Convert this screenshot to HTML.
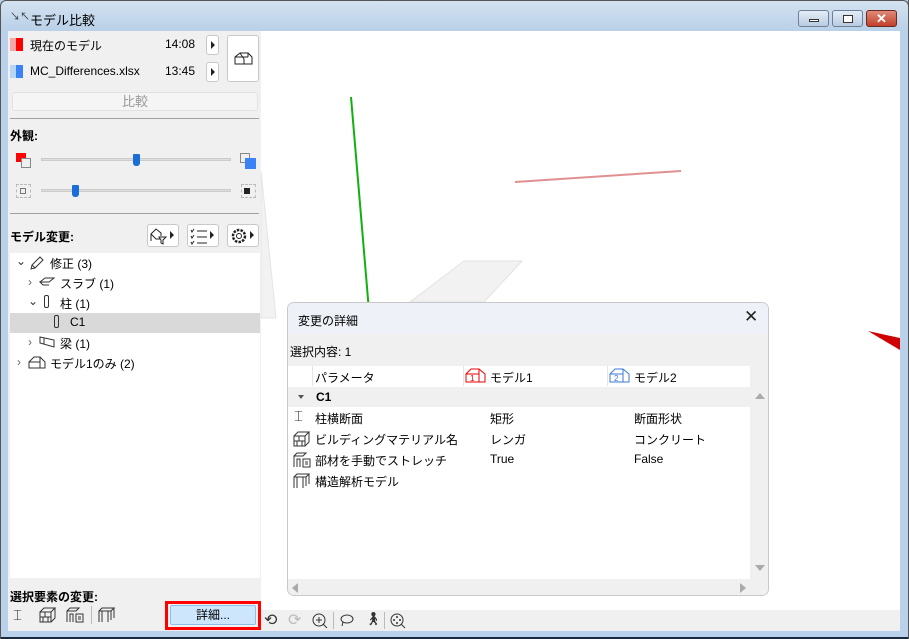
<!DOCTYPE html>
<html><head><meta charset="utf-8"><style>
*{box-sizing:border-box;margin:0;padding:0}
html,body{width:909px;height:639px;overflow:hidden}
body{background:#b9d1ea;font-family:"Liberation Sans","Noto Sans CJK JP",sans-serif;font-size:12px;color:#000;position:relative}
.a{position:absolute}
.t{white-space:nowrap}
.btn{position:absolute;background:#fff;border:1px solid #c8c8c8;border-radius:3px}
</style></head><body>
<div class="a" style="left:0;top:0;width:909px;height:31px;background:linear-gradient(#d4e2f1,#b9d0e8);border:1px solid #555;border-bottom:none;border-radius:6px 6px 0 0"></div>
<div class="a t" style="left:10px;top:8px;font-size:10px;color:#333">↘↖</div>
<div class="a t" style="left:30px;top:10px;font-size:13px">モデル比較</div>
<div class="a" style="left:798px;top:10px;width:31px;height:17px;border:1px solid #6d7f97;border-radius:3px;background:linear-gradient(#e4edf7,#b9cbe2)"><div class="a" style="left:10px;top:8px;width:10px;height:3px;border:1px solid #333;background:#fff"></div></div>
<div class="a" style="left:832px;top:10px;width:31px;height:17px;border:1px solid #6d7f97;border-radius:3px;background:linear-gradient(#e4edf7,#b9cbe2)"><div class="a" style="left:10px;top:4px;width:10px;height:8px;border:1px solid #333;background:#fff"></div></div>
<div class="a t" style="left:866px;top:10px;width:31px;height:17px;border:1px solid #6b2a20;border-radius:3px;background:linear-gradient(#e08a78,#c0402c);color:#fff;font-weight:bold;text-align:center;line-height:15px;font-size:13px">✕</div>
<div class="a" style="left:8px;top:31px;width:892px;height:600px;background:#f0f0f0"></div>
<div class="a" style="left:261px;top:31px;width:639px;height:579px;background:#fff"></div>
<div class="a" style="left:0;top:637px;width:909px;height:2px;background:#1a2a3a"></div>
<div class="a" style="left:0;top:31px;width:1px;height:608px;background:#555"></div>
<div class="a" style="left:908px;top:0;width:1px;height:639px;background:#555"></div>
<div class="a" style="left:10px;top:38px;width:6px;height:13px;background:#f8a8a8"></div><div class="a" style="left:16px;top:38px;width:7px;height:13px;background:#f00"></div>
<div class="a t" style="left:30px;top:37px;font-size:12px">現在のモデル</div>
<div class="a t" style="left:165px;top:37px">14:08</div>
<div class="btn" style="left:206px;top:35px;width:13px;height:20px"><div class="a" style="left:4px;top:5px;border-left:4px solid #222;border-top:4px solid transparent;border-bottom:4px solid transparent"></div></div>
<div class="a" style="left:10px;top:65px;width:6px;height:13px;background:#b8d4f8"></div><div class="a" style="left:16px;top:65px;width:7px;height:13px;background:#3b82f6"></div>
<div class="a t" style="left:30px;top:64px">MC_Differences.xlsx</div>
<div class="a t" style="left:165px;top:64px">13:45</div>
<div class="btn" style="left:206px;top:62px;width:13px;height:20px"><div class="a" style="left:4px;top:5px;border-left:4px solid #222;border-top:4px solid transparent;border-bottom:4px solid transparent"></div></div>
<div class="btn" style="left:227px;top:35px;width:32px;height:47px"><svg class="a" style="left:6px;top:15px" width="20" height="14"><path d="M1 13V6L6 2H14L18 6V13ZM1 6H14M6 2L10 8V13M14 2V6" fill="none" stroke="#222" stroke-width="1"/></svg></div>
<div class="a t" style="left:12px;top:92px;width:246px;height:19px;background:#f5f5f5;border:1px solid #e2e2e2;border-radius:3px;text-align:center;color:#999;line-height:17px;font-size:13px">比較</div>
<div class="a" style="left:10px;top:118px;width:249px;height:1px;background:#a0a0a0"></div>
<div class="a t" style="left:10px;top:127px;font-weight:bold">外観:</div>
<div class="a" style="left:16px;top:153px;width:10px;height:9px;background:#f00"></div>
<div class="a" style="left:21px;top:158px;width:10px;height:10px;border:1px solid #888;background:#f0f0f0"></div>
<div class="a" style="left:41px;top:158px;width:190px;height:3px;background:#ddd;border:1px solid #ccc"></div>
<div class="a" style="left:133px;top:154px;width:7px;height:12px;background:#1a6ed8;border-radius:1px 1px 3px 3px"></div>
<div class="a" style="left:240px;top:153px;width:10px;height:10px;border:1px solid #888"></div>
<div class="a" style="left:245px;top:158px;width:11px;height:11px;background:#3b82f6"></div>
<div class="a" style="left:16px;top:184px;width:15px;height:14px;border:1px dashed #bbb"></div>
<div class="a" style="left:20px;top:188px;width:6px;height:6px;border:1px solid #777"></div>
<div class="a" style="left:41px;top:189px;width:190px;height:3px;background:#ddd;border:1px solid #ccc"></div>
<div class="a" style="left:72px;top:185px;width:7px;height:12px;background:#1a6ed8;border-radius:1px 1px 3px 3px"></div>
<div class="a" style="left:241px;top:184px;width:15px;height:14px;border:1px dashed #bbb"></div>
<div class="a" style="left:244px;top:188px;width:6px;height:6px;background:#222"></div>
<div class="a" style="left:10px;top:213px;width:249px;height:1px;background:#a0a0a0"></div>
<div class="a t" style="left:10px;top:228px;font-weight:bold">モデル変更:</div>
<div class="btn" style="left:147px;top:224px;width:32px;height:23px"><span class="a" style="left:22px;top:6px;border-left:4px solid #222;border-top:4px solid transparent;border-bottom:4px solid transparent"></span><svg class="a" style="left:2px;top:2px" width="18" height="18"><path d="M1 14V7L6 2L11 6V9M1 7L6 12H10M9 10H16L13 13V17L11 16V13Z" fill="none" stroke="#222"/></svg></div>
<div class="btn" style="left:187px;top:224px;width:32px;height:23px"><span class="a" style="left:22px;top:6px;border-left:4px solid #222;border-top:4px solid transparent;border-bottom:4px solid transparent"></span><svg class="a" style="left:2px;top:2px" width="18" height="18"><path d="M7 4H17M7 10H17M7 16H17M1 3L2 5L4 2M1 9L2 11L4 8M1 15L2 17L4 14" fill="none" stroke="#222"/></svg></div>
<div class="btn" style="left:227px;top:224px;width:32px;height:23px"><span class="a" style="left:22px;top:6px;border-left:4px solid #222;border-top:4px solid transparent;border-bottom:4px solid transparent"></span><svg class="a" style="left:2px;top:2px" width="18" height="18"><circle cx="9" cy="9" r="6" fill="none" stroke="#222" stroke-dasharray="2.5 1.2" stroke-width="2.5"/><circle cx="9" cy="9" r="2.5" fill="none" stroke="#222"/></svg></div>
<div class="a" style="left:10px;top:253px;width:250px;height:325px;background:#fff"></div>
<div class="a" style="left:10px;top:313px;width:250px;height:20px;background:#d9d9d9"></div>
<div class="a t" style="left:16px;top:254px;font-size:12px;color:#333">⌄</div>
<svg class="a" style="left:29px;top:255px" width="16" height="16"><path d="M2 14L3 10L11 2L14 5L6 13ZM3 10L6 13" fill="none" stroke="#333"/></svg>
<div class="a t" style="left:50px;top:255px">修正 (3)</div>
<div class="a t" style="left:28px;top:275px;color:#666">›</div>
<svg class="a" style="left:39px;top:277px" width="16" height="10"><path d="M1 5L6 1H15L10 5H1L4 8H10" fill="none" stroke="#333"/></svg>
<div class="a t" style="left:60px;top:275px">スラブ (1)</div>
<div class="a t" style="left:28px;top:294px;color:#333">⌄</div>
<div class="a" style="left:44px;top:295px;width:5px;height:13px;border:1px solid #333;border-radius:2px"></div>
<div class="a t" style="left:60px;top:295px">柱 (1)</div>
<div class="a" style="left:54px;top:315px;width:5px;height:13px;border:1px solid #333;border-radius:2px"></div>
<div class="a t" style="left:70px;top:315px">C1</div>
<div class="a t" style="left:28px;top:335px;color:#666">›</div>
<svg class="a" style="left:39px;top:336px" width="16" height="12"><path d="M1 1L15 4V11L1 7ZM5 2V8" fill="none" stroke="#333"/></svg>
<div class="a t" style="left:60px;top:335px">梁 (1)</div>
<div class="a t" style="left:17px;top:355px;color:#666">›</div>
<svg class="a" style="left:28px;top:356px" width="18" height="13"><path d="M1 12V6L6 1H12L17 6V12ZM1 6H12V12M12 1V6" fill="none" stroke="#333"/></svg>
<div class="a t" style="left:50px;top:355px">モデル1のみ (2)</div>
<div class="a t" style="left:10px;top:588px;font-weight:bold">選択要素の変更:</div>
<div class="a t" style="left:13px;top:607px;font-size:15px;color:#333">⌶</div>
<svg class="a" style="left:39px;top:607px" width="18" height="16"><path d="M1 5H12V15H1ZM1 5L5 1H16L12 5M16 1V11L12 15M1 10H12M6 5V10M4 10V15M9 10V15" fill="none" stroke="#333"/></svg>
<svg class="a" style="left:66px;top:607px" width="18" height="16"><path d="M1 15V4L4 1H13L10 4H1M4 15V7H7V15M10 7H17V15H10ZM12 10H15M12 12H15" fill="none" stroke="#333"/></svg>
<div class="a" style="left:91px;top:606px;width:1px;height:18px;background:#bbb"></div>
<svg class="a" style="left:98px;top:607px" width="18" height="16"><path d="M1 15V4L4 1H16L13 4H1M4 4V15M10 4V15M13 4V13M16 1V11" fill="none" stroke="#333"/></svg>
<div class="a" style="left:165px;top:601px;width:96px;height:29px;border:3px solid #f00"></div>
<div class="a t" style="left:170px;top:605px;width:86px;height:20px;background:#cde6fb;border:1px solid #8fbfe8;border-radius:2px;text-align:center;line-height:18px">詳細...</div>
<svg class="a" style="left:261px;top:31px" width="639" height="579">
<path d="M0 140L15 287H0Z" fill="#f2f2f2" stroke="#e4e4e4"/>
<path d="M203 230H261L223 271H149Z" fill="#f2f2f2" stroke="#e2e2e2"/>
<path d="M90 66L108 280" stroke="#10b010" stroke-width="2"/>
<path d="M254 151L420 140" stroke="#e09090" stroke-width="2"/>
<path d="M607 300L639 307V319Z" fill="#d00000"/>
</svg>
<div class="a t" style="left:264px;top:610px;font-size:16px;color:#333">⟲</div>
<div class="a t" style="left:288px;top:610px;font-size:16px;color:#bbb">⟳</div>
<svg class="a" style="left:311px;top:612px" width="18" height="18"><circle cx="8" cy="8" r="6" fill="none" stroke="#333"/><path d="M12 12L16 16M5 8H11M8 5V11" stroke="#333"/></svg>
<div class="a" style="left:333px;top:612px;width:1px;height:17px;background:#bbb"></div>
<svg class="a" style="left:339px;top:613px" width="16" height="14"><ellipse cx="8" cy="6" rx="6" ry="4" fill="none" stroke="#333"/><path d="M4 9L3 13" stroke="#333"/></svg>
<div class="a t" style="left:365px;top:611px;font-size:13px;color:#333">🚶︎</div>
<div class="a" style="left:384px;top:612px;width:1px;height:17px;background:#bbb"></div>
<svg class="a" style="left:389px;top:612px" width="18" height="18"><circle cx="8" cy="8" r="6" fill="none" stroke="#333"/><path d="M12 12L16 16" stroke="#333"/><circle cx="8" cy="5" r="1" fill="#333"/><circle cx="5" cy="8" r="1" fill="#333"/><circle cx="11" cy="8" r="1" fill="#333"/><circle cx="8" cy="11" r="1" fill="#333"/></svg>
<div class="a" style="left:287px;top:302px;width:482px;height:294px;background:#fff;border:1px solid #c8c8c8;border-radius:7px;overflow:hidden">
 <div class="a" style="left:0;top:0;width:482px;height:31px;background:#eef2f8"></div>
 <div class="a t" style="left:10px;top:9px;font-size:12px">変更の詳細</div>
 <div class="a t" style="left:456px;top:4px;font-size:17px;color:#222">✕</div>
 <div class="a" style="left:0;top:31px;width:482px;height:32px;background:#f0f0f0"></div>
 <div class="a t" style="left:2px;top:40px">選択内容: 1</div>
 <div class="a" style="left:0;top:63px;width:482px;height:20px;background:#fff"></div>
 <div class="a" style="left:462px;top:63px;width:20px;height:230px;background:#f0f0f0"></div>
 <div class="a" style="left:0;top:276px;width:482px;height:18px;background:#f0f0f0"></div>
 <div class="a" style="left:0;top:63px;width:25px;height:20px;border-right:1px solid #e5e5e5"></div>
 <div class="a t" style="left:27px;top:66px">パラメータ</div>
 <div class="a" style="left:175px;top:63px;width:1px;height:20px;background:#e5e5e5"></div>
 <svg class="a" style="left:177px;top:65px" width="22" height="15"><path d="M1 14V6L6 1H14L20 6V14ZM1 6H14V14M14 1V6" fill="none" stroke="#e00"/><text x="5" y="13" font-size="8" fill="#e00" font-family="Liberation Sans">1</text></svg>
 <div class="a t" style="left:202px;top:66px">モデル1</div>
 <div class="a" style="left:319px;top:63px;width:1px;height:20px;background:#e5e5e5"></div>
 <svg class="a" style="left:321px;top:65px" width="22" height="15"><path d="M1 14V6L6 1H14L20 6V14ZM1 6H14V14M14 1V6" fill="none" stroke="#3b7ad8"/><text x="5" y="13" font-size="8" fill="#3b7ad8" font-family="Liberation Sans">2</text></svg>
 <div class="a t" style="left:346px;top:66px">モデル2</div>
 <div class="a" style="left:0;top:84px;width:462px;height:20px;background:#f0f0f0"></div>
 <div class="a" style="left:10px;top:92px;border-top:4px solid #555;border-left:3.5px solid transparent;border-right:3.5px solid transparent"></div>
 <div class="a t" style="left:28px;top:87px;font-weight:bold">C1</div>
 <div class="a" style="left:467px;top:90px;border-bottom:6px solid #aaa;border-left:5px solid transparent;border-right:5px solid transparent"></div>
 <div class="a" style="left:467px;top:262px;border-top:6px solid #aaa;border-left:5px solid transparent;border-right:5px solid transparent"></div>
 <div class="a" style="left:452px;top:280px;border-left:6px solid #aaa;border-top:5px solid transparent;border-bottom:5px solid transparent"></div>
 <div class="a" style="left:4px;top:280px;border-right:6px solid #aaa;border-top:5px solid transparent;border-bottom:5px solid transparent"></div>
 <div class="a t" style="left:6px;top:105px;font-size:15px;color:#333">⌶</div>
 <div class="a t" style="left:27px;top:107px">柱横断面</div><div class="a t" style="left:202px;top:107px">矩形</div><div class="a t" style="left:346px;top:107px">断面形状</div>
 <svg class="a" style="left:5px;top:128px" width="18" height="16"><path d="M1 5H12V15H1ZM1 5L5 1H16L12 5M16 1V11L12 15M1 10H12M6 5V10M4 10V15M9 10V15" fill="none" stroke="#333"/></svg>
 <div class="a t" style="left:27px;top:128px">ビルディングマテリアル名</div><div class="a t" style="left:202px;top:128px">レンガ</div><div class="a t" style="left:346px;top:128px">コンクリート</div>
 <svg class="a" style="left:5px;top:149px" width="18" height="16"><path d="M1 15V4L4 1H13L10 4H1M4 15V7H7V15M10 7H17V15H10ZM12 10H15M12 12H15" fill="none" stroke="#333"/></svg>
 <div class="a t" style="left:27px;top:149px">部材を手動でストレッチ</div><div class="a t" style="left:202px;top:149px">True</div><div class="a t" style="left:346px;top:149px">False</div>
 <svg class="a" style="left:5px;top:170px" width="18" height="16"><path d="M1 15V4L4 1H16L13 4H1M4 4V15M10 4V15M13 4V13M16 1V11" fill="none" stroke="#333"/></svg>
 <div class="a t" style="left:27px;top:170px">構造解析モデル</div>
</div>
</body></html>
